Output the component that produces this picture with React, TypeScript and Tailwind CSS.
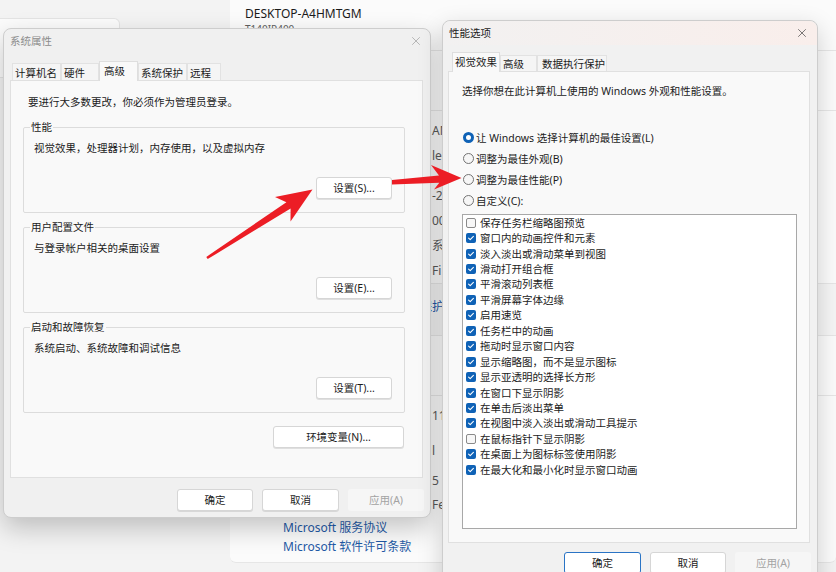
import { X } from 'lucide-react'

const perfItems: [string, boolean][] = [
  ['保存任务栏缩略图预览', false],
  ['窗口内的动画控件和元素', true],
  ['淡入淡出或滑动菜单到视图', true],
  ['滑动打开组合框', true],
  ['平滑滚动列表框', true],
  ['平滑屏幕字体边缘', true],
  ['启用速览', true],
  ['任务栏中的动画', true],
  ['拖动时显示窗口内容', true],
  ['显示缩略图，而不是显示图标', true],
  ['显示亚透明的选择长方形', true],
  ['在窗口下显示阴影', true],
  ['在单击后淡出菜单', true],
  ['在视图中淡入淡出或滑动工具提示', true],
  ['在鼠标指针下显示阴影', false],
  ['在桌面上为图标标签使用阴影', true],
  ['在最大化和最小化时显示窗口动画', true],
]

function Btn({
  label,
  className = '',
  disabled = false,
  focused = false,
}: {
  label: string
  className?: string
  disabled?: boolean
  focused?: boolean
}) {
  if (disabled) {
    return (
      <div className={`h-[22px] rounded-[3px] bg-[#f6f6f6] text-[#a3a3a3] flex items-center justify-center ${className}`}>
        {label}
      </div>
    )
  }
  return (
    <div
      className={`h-[22px] rounded-[3px] bg-white flex items-center justify-center shadow-[0_1px_0_rgba(0,0,0,0.1)] ${
        focused ? 'border-[1.5px] border-[#2a74c5]' : 'border border-[#d6d6d6]'
      } ${className}`}
    >
      {label}
    </div>
  )
}

function Group({ title, desc, btn, className = '' }: { title: string; desc: string; btn: string; className?: string }) {
  return (
    <div className={`relative ml-[12px] w-[382px] h-[86px] border border-[#dcdcdc] rounded-[2px] flex flex-col ${className}`}>
      <span className="absolute left-[6px] -top-[8px] px-[1px] bg-[#f9f9f9]">{title}</span>
      <div className="pt-[13px] pl-[10px]">{desc}</div>
      <Btn label={btn} className="w-[76px] mt-[22px] self-end mr-[12px]" />
    </div>
  )
}

function Check({ on }: { on: boolean }) {
  if (!on) return <span className="w-[10px] h-[10px] rounded-[2px] border border-[#8a8a8a] bg-[#f7f7f7] shrink-0" />
  return (
    <span className="w-[10px] h-[10px] rounded-[2px] bg-[#0f62b6] shrink-0 flex items-center justify-center">
      <svg width="8" height="8" viewBox="0 0 8 8">
        <path d="M1.6 4.1 L3.2 5.6 L6.4 2.4" fill="none" stroke="white" strokeWidth="1.1" strokeLinecap="round" strokeLinejoin="round" />
      </svg>
    </span>
  )
}

function Radio({ on, label }: { on: boolean; label: string }) {
  return (
    <div className="h-[21px] flex items-center gap-[2px] pl-[14px]">
      {on ? (
        <span className="w-[11px] h-[11px] rounded-full border-[3px] border-[#0f62b6] bg-white shrink-0" />
      ) : (
        <span className="w-[11px] h-[11px] rounded-full border border-[#737373] bg-[#f6f6f6] shrink-0" />
      )}
      <span>{label}</span>
    </div>
  )
}

function Background() {
  return (
    <div className="flex h-full">
      <div className="w-[230px] shrink-0 pt-[18px]">
        <div className="w-[120px] h-[60px] rounded-r-[6px] border border-l-0 border-[#e4e4e4] bg-[#fbfbfb]" />
      </div>
      <div className="flex-1 flex flex-col">
        <div className="h-[51px] shrink-0 bg-[#fbfbfb] border-b border-[#e6e6e6] pl-[15px] pt-[5px]">
          <div className="text-[12px] leading-[18px] text-[#1b1b1b]">DESKTOP-A4HMTGM</div>
          <div className="text-[10px] leading-[12px] text-[#5f5f5f]">T140IP400</div>
        </div>
        <div className="h-[60px] shrink-0 bg-[#fbfbfb] border-b border-[#e6e6e6]" />
        <div className="h-[173px] shrink-0 bg-[#fbfbfb] border-b border-[#e6e6e6] pl-[202px] pt-[7px] text-[12px] text-[#5a5a5a]">
          <div className="h-[25px] leading-[25px]">AMD</div>
          <div className="h-[25px] leading-[25px]">led</div>
          <div className="h-[15px]" />
          <div className="h-[25px] leading-[25px]">-2E3F</div>
          <div className="h-[25px] leading-[25px]">00342</div>
          <div className="h-[25px] leading-[25px]">系统</div>
          <div className="h-[25px] leading-[25px]">Fi</div>
        </div>
        <div className="h-[52px] shrink-0 bg-[#f5f5f5] border-b border-[#e6e6e6] pl-[166px] pt-[14px] text-[12px] leading-[18px] text-[#1f5aa6]">
          系统保护
        </div>
        <div className="h-[60px] shrink-0 bg-[#fbfbfb] border-b border-[#e6e6e6]" />
        <div className="h-[167px] shrink-0 bg-[#fbfbfb] rounded-b-[6px] border-b border-[#e6e6e6] pt-[7px] text-[12px] text-[#5a5a5a]">
          <div className="h-[25px] leading-[25px] pl-[202px]">11</div>
          <div className="h-[25px] leading-[25px] pl-[202px] mt-[10px]">l</div>
          <div className="h-[25px] leading-[25px] pl-[202px] mt-[5px]">5</div>
          <div className="h-[24px] leading-[24px] pl-[202px]">Fe</div>
          <div className="mt-[1px] pl-[53px] text-[12px] text-[#1f5aa6]">
            <div className="h-[19px] leading-[19px]">Microsoft 服务协议</div>
            <div className="h-[19px] leading-[19px]">Microsoft 软件许可条款</div>
          </div>
        </div>
      </div>
    </div>
  )
}

function SystemProps() {
  const tabs = [
    { label: '计算机名', w: 'w-[49px]' },
    { label: '硬件', w: 'w-[38px]' },
    { label: '高级', w: 'w-[39px]', active: true },
    { label: '系统保护', w: 'w-[49px]' },
    { label: '远程', w: 'w-[34px]' },
  ]
  return (
    <div className="absolute left-[3px] top-[28px] w-[428px] h-[490px] rounded-[8px] border border-[#cdcdcd] bg-[#f0f0f0] shadow-[0_10px_26px_rgba(0,0,0,0.22)] flex flex-col">
      <div className="h-[24px] shrink-0 flex items-center justify-between pl-[6px] pr-[7px]">
        <span className="text-[#8c8c8c]">系统属性</span>
        <X size={14} strokeWidth={1} className="text-[#8c8c8c]" />
      </div>
      <div className="relative z-10 mt-[8px] ml-[8px] h-[19px] flex items-end">
        {tabs.map((t) =>
          t.active ? (
            <div key={t.label} className={`${t.w} h-[20px] -mb-px pl-[4px] pt-[2px] bg-[#f9f9f9] border border-b-0 border-[#dedede]`}>
              {t.label}
            </div>
          ) : (
            <div key={t.label} className={`${t.w} h-[17px] pl-[2px] pt-[2px] bg-[#f5f5f5] border border-b-0 border-[#e2e2e2]`}>
              {t.label}
            </div>
          ),
        )}
      </div>
      <div className="ml-[6px] w-[413px] h-[398px] shrink-0 border border-[#e0e0e0] bg-[#f9f9f9] flex flex-col">
        <div className="pt-[14px] pl-[17px]">要进行大多数更改，你必须作为管理员登录。</div>
        <Group className="mt-[18px]" title="性能" desc="视觉效果，处理器计划，内存使用，以及虚拟内存" btn="设置(S)..." />
        <Group className="mt-[14px]" title="用户配置文件" desc="与登录帐户相关的桌面设置" btn="设置(E)..." />
        <Group className="mt-[14px]" title="启动和故障恢复" desc="系统启动、系统故障和调试信息" btn="设置(T)..." />
        <Btn label="环境变量(N)..." className="w-[131px] mt-[13px] self-end mr-[18px]" />
      </div>
      <div className="mt-[11px] flex justify-end gap-[9px] pr-[6px]">
        <Btn label="确定" className="w-[76px]" />
        <Btn label="取消" className="w-[77px]" />
        <Btn label="应用(A)" className="w-[76px]" disabled />
      </div>
    </div>
  )
}

function PerfOptions() {
  return (
    <div className="absolute left-[442px] top-[20px] w-[376px] h-[600px] rounded-t-[8px] border border-[#cdcdcd] bg-[#f1f1f1] shadow-[0_8px_24px_rgba(0,0,0,0.18)] flex flex-col">
      <div className="h-[24px] shrink-0 rounded-t-[8px] bg-gradient-to-r from-[#f2f1f1] to-[#f9eeeb] flex items-center justify-between pl-[6px] pr-[8px]">
        <span>性能选项</span>
        <X size={14} strokeWidth={1.1} className="text-[#333]" />
      </div>
      <div className="relative z-10 mt-[7px] ml-[9px] h-[19px] flex items-end">
        <div className="w-[48px] h-[20px] -mb-px pl-[2px] pt-[2px] bg-[#f9f9f9] border border-b-0 border-[#dedede]">视觉效果</div>
        <div className="w-[37px] h-[16px] pl-[2px] pt-[1px] bg-[#f5f5f5] border border-b-0 border-[#e2e2e2]">高级</div>
        <div className="w-[70px] h-[16px] pl-[4px] pt-[1px] bg-[#f5f5f5] border border-b-0 border-[#e2e2e2]">数据执行保护</div>
      </div>
      <div className="ml-[5px] w-[362px] h-[472px] shrink-0 border border-[#e0e0e0] bg-[#f9f9f9] flex flex-col">
        <div className="pt-[12px] pl-[13px]">选择你想在此计算机上使用的 Windows 外观和性能设置。</div>
        <div className="mt-[29px]">
          <Radio on label="让 Windows 选择计算机的最佳设置(L)" />
          <Radio on={false} label="调整为最佳外观(B)" />
          <Radio on={false} label="调整为最佳性能(P)" />
          <Radio on={false} label="自定义(C):" />
        </div>
        <div className="mt-[3px] ml-[13px] w-[335px] h-[315px] border border-[#a8a8a8] bg-white pl-[3px]">
          {perfItems.map(([label, on]) => (
            <div key={label} className="h-[15.45px] flex items-center gap-[4px]">
              <Check on={on} />
              <span className="leading-[14px]">{label}</span>
            </div>
          ))}
        </div>
      </div>
      <div className="mt-[9px] flex justify-end gap-[9px] pr-[6px]">
        <Btn label="确定" className="w-[77px]" focused />
        <Btn label="取消" className="w-[76px]" />
        <Btn label="应用(A)" className="w-[76px]" disabled />
      </div>
    </div>
  )
}

function Arrows() {
  return (
    <svg className="absolute inset-0 pointer-events-none" width="836" height="572" viewBox="0 0 836 572">
      <polygon
        fill="#ec1d25"
        points="206.3,256.9 286.4,202.2 275,197 312.5,189.5 290.5,221.5 290.6,208.4 207.7,259.1"
      />
      <polygon fill="#ec1d25" points="392,180 439,175.6 431,165 461.5,178 434,189.5 439.3,182.8 392,184.4" />
    </svg>
  )
}

export default function App() {
  return (
    <div className="relative w-[836px] h-[572px] overflow-hidden bg-[#f3f3f3] text-[#1b1b1b] text-[10.5px] leading-[14px] font-['Noto_Sans','Noto_Sans_CJK_SC',sans-serif]">
      <Background />
      <SystemProps />
      <PerfOptions />
      <Arrows />
    </div>
  )
}
